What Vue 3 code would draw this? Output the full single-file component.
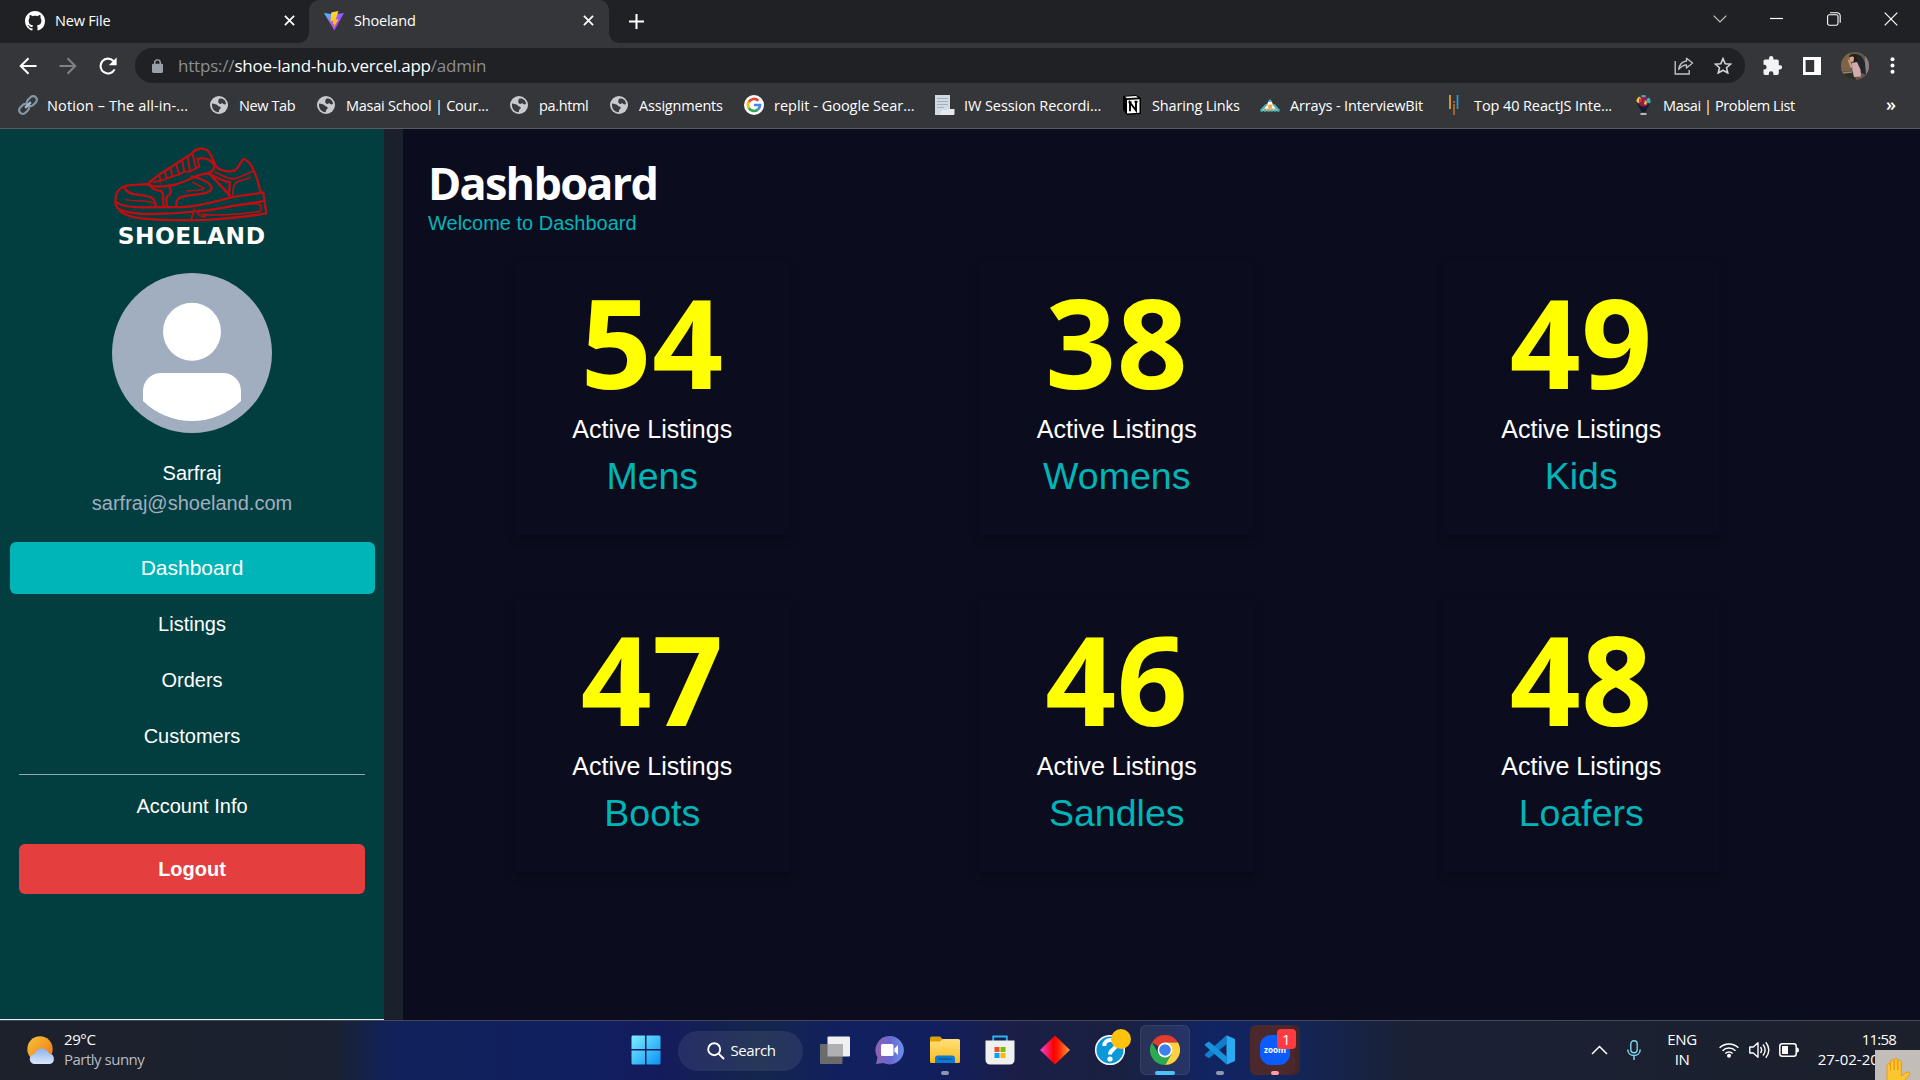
<script setup>
const bookmarks = [
  { icon: 'link', label: 'Notion – The all-in-...', width: 191, spacing: 0.12 },
  { icon: 'globe', label: 'New Tab', width: 107, spacing: -0.4 },
  { icon: 'globe', label: 'Masai School | Cour...', width: 193, spacing: -0.25 },
  { icon: 'globe', label: 'pa.html', width: 100, spacing: -0.35 },
  { icon: 'globe', label: 'Assignments', width: 135, spacing: -0.2 },
  { icon: 'google', label: 'replit - Google Sear...', width: 190, spacing: 0 },
  { icon: 'doc', label: 'IW Session Recordi...', width: 188, spacing: -0.08 },
  { icon: 'notion', label: 'Sharing Links', width: 138, spacing: -0.15 },
  { icon: 'ib', label: 'Arrays - InterviewBit', width: 184, spacing: -0.15 },
  { icon: 'bars', label: 'Top 40 ReactJS Inte...', width: 189, spacing: -0.1 },
  { icon: 'balloon', label: 'Masai | Problem List', width: 200, spacing: -0.4 },
]
const links = ['Dashboard', 'Listings', 'Orders', 'Customers']
const cards = [
  { count: 54, name: 'Mens' },
  { count: 38, name: 'Womens' },
  { count: 49, name: 'Kids' },
  { count: 47, name: 'Boots' },
  { count: 46, name: 'Sandles' },
  { count: 48, name: 'Loafers' },
]
</script>

<template>
  <div class="screen">
    <header class="browser">
      <div class="tabs">
        <div class="tab">
          <svg class="fav" viewBox="0 0 16 16"><path fill="#fff" d="M8 0C3.58 0 0 3.58 0 8c0 3.54 2.29 6.53 5.47 7.59.4.07.55-.17.55-.38 0-.19-.01-.82-.01-1.49-2.01.37-2.53-.49-2.69-.94-.09-.23-.48-.94-.82-1.13-.28-.15-.68-.52-.01-.53.63-.01 1.08.58 1.23.82.72 1.21 1.87.87 2.33.66.07-.52.28-.87.51-1.07-1.78-.2-3.64-.89-3.64-3.95 0-.87.31-1.59.82-2.15-.08-.2-.36-1.02.08-2.12 0 0 .67-.21 2.2.82.64-.18 1.32-.27 2-.27s1.36.09 2 .27c1.53-1.04 2.2-.82 2.2-.82.44 1.1.16 1.92.08 2.12.51.56.82 1.27.82 2.15 0 3.07-1.87 3.75-3.65 3.95.29.25.54.73.54 1.48 0 1.07-.01 1.93-.01 2.2 0 .21.15.46.55.38A8.01 8.01 0 0 0 16 8c0-4.42-3.58-8-8-8z"/></svg>
          <span class="tab-title">New File</span>
          <svg class="close" viewBox="0 0 12 12"><path d="M1 1l10 10M11 1L1 11" stroke="#fff" stroke-width="1.9"/></svg>
        </div>
        <div class="tab active">
          <svg class="fav" viewBox="0 0 20 20">
            <defs>
              <linearGradient id="viteA" x1="0" y1="0" x2="1" y2="1"><stop offset="0" stop-color="#41d1ff"/><stop offset=".55" stop-color="#a34bff"/><stop offset="1" stop-color="#bd34fe"/></linearGradient>
              <linearGradient id="viteB" x1="0" y1="0" x2="0" y2="1"><stop offset="0" stop-color="#ffdd35"/><stop offset="1" stop-color="#ffa800"/></linearGradient>
            </defs>
            <path fill="url(#viteA)" d="M0 2l10 1.6L20 2 10.4 19.6z"/>
            <path fill="url(#viteB)" d="M14.4 0L7.3 1.4 6.3 10.400l2.900-.5-.7 3.500 1.700-.5-1 4.800 5.400-9.500-2.900.4z"/>
          </svg>
          <span class="tab-title">Shoeland</span>
          <svg class="close" viewBox="0 0 12 12"><path d="M1 1l10 10M11 1L1 11" stroke="#fff" stroke-width="1.9"/></svg>
        </div>
        <svg class="plus" viewBox="0 0 16 16"><path d="M8 0v16M0 8h16" stroke="#fff" stroke-width="2.2"/></svg>
        <div class="window-controls">
          <svg width="14" height="8" viewBox="0 0 14 8"><path d="M.7.7L7 7l6.3-6.3" fill="none" stroke="#ccc" stroke-width="1.1"/></svg>
          <svg width="13" height="13" viewBox="0 0 13 13"><path d="M0 6.5h13" stroke="#fff" stroke-width="1.2"/></svg>
          <svg width="14" height="14" viewBox="0 0 14 14"><rect x=".6" y="2.8" width="10.4" height="10.4" rx="1.6" fill="none" stroke="#fff" stroke-width="1.1"/><path d="M3 .8h7.2a3 3 0 0 1 3 3v7" fill="none" stroke="#fff" stroke-width="1.1"/></svg>
          <svg width="14" height="14" viewBox="0 0 14 14"><path d="M.7.7l12.6 12.6M13.3.7L.7 13.3" stroke="#fff" stroke-width="1.2"/></svg>
        </div>
      </div>

      <div class="toolbar">
        <div class="nav-buttons">
          <svg width="18" height="18" viewBox="0 0 18 18"><path d="M17.500 9H2M9.500 1.200L1.700 9l7.800 7.800" fill="none" stroke="#fff" stroke-width="2"/></svg>
          <svg width="18" height="18" viewBox="0 0 18 18"><path d="M.5 9h15.500M8.500 1.200L16.300 9l-7.800 7.800" fill="none" stroke="#808184" stroke-width="2"/></svg>
          <svg width="18" height="18" viewBox="0 0 18 18"><path d="M15.600 12.400A7.400 7.400 0 1 1 14.400 4" fill="none" stroke="#fff" stroke-width="2.1"/><path d="M17.600.4v7.800H9.800z" fill="#fff"/></svg>
        </div>
        <div class="omnibox">
          <svg width="11" height="14" viewBox="0 0 12 15"><rect x="0" y="5" width="12" height="10" rx="1.5" fill="#9aa0a6"/><path d="M3 6V3.800a3 3 0 0 1 6 0V6" fill="none" stroke="#9aa0a6" stroke-width="1.600"/></svg>
          <span class="url">https://<b>shoe-land-hub.vercel.app</b>/admin</span>
          <svg class="share" width="20" height="18" viewBox="0 0 20 18"><path d="M1.200 4v13h14v-4" fill="none" stroke="#bdc1c6" stroke-width="1.400"/><path d="M12.500 1.200L18.600 6l-6.100 5V8C9 8 7 9.500 4.700 12.400 5.400 7.800 8 4.600 12.500 4z" fill="none" stroke="#bdc1c6" stroke-width="1.400" stroke-linejoin="round"/></svg>
          <svg width="18" height="17" viewBox="0 0 18 17"><path d="M9 1.600l2.200 5.100 5.500.4-4.200 3.600 1.300 5.300L9 13.200 4.200 16l1.300-5.300L1.300 7.100l5.500-.4z" fill="none" stroke="#d0d3d7" stroke-width="1.600"/></svg>
        </div>
        <div class="tool-icons">
          <svg width="19" height="19" viewBox="0 0 19 19"><path fill="#f1f3f4" d="M17 9.200h-1.200V5.300c0-.9-.8-1.700-1.700-1.700h-3.700V2.300a2.200 2.200 0 0 0-4.400 0v1.300H2.200C1.300 3.600.5 4.400.5 5.300v3.500h1.200a2.400 2.400 0 0 1 0 4.700H.5v3.700c0 .9.800 1.700 1.700 1.700h3.600v-1.300a2.300 2.300 0 0 1 4.600 0v1.300h3.700c.9 0 1.700-.8 1.700-1.700v-3.800H17a2.100 2.100 0 0 0 0-4.200z"/></svg>
          <svg width="18" height="18" viewBox="0 0 18 18"><path fill="#fff" fill-rule="evenodd" d="M0 0h18v18H0zM2.600 3v12h8.600V3z"/></svg>
          <svg width="28" height="28" viewBox="0 0 28 28">
            <defs><clipPath id="pf"><circle cx="14" cy="14" r="14"/></clipPath></defs>
            <g clip-path="url(#pf)"><rect width="28" height="28" fill="#65584a"/><path d="M0 0h9v22H0z" fill="#7d6448"/><path d="M24 0h4v28h-4z" fill="#8d7d80"/><path d="M13 2q8-1 11 9l1 12-6-3-5-9z" fill="#20282c"/><path d="M0 20l12-1 3 9H0z" fill="#2c2e28"/><path d="M1 21l10-1" stroke="#8f897a" stroke-width="1.500"/><path d="M8 4q4-4 8 0l1 6-4 2z" fill="#2a1c18"/><path d="M8.500 5.500q3-2 4.500 0l-.5 4-3 .5z" fill="#d9a98c"/><path d="M11 11l5-1 3.500 7.500.5 7-7 .5-1.500-6z" fill="#d3a9b0"/><path d="M6.500 7l2 1 3 6.500-1.500 2z" fill="#cfa58c"/></g>
          </svg>
          <svg width="5" height="17" viewBox="0 0 5 17"><g fill="#fff"><circle cx="2.500" cy="2.200" r="2"/><circle cx="2.500" cy="8.500" r="2"/><circle cx="2.500" cy="14.800" r="2"/></g></svg>
        </div>
      </div>

      <div class="bookmarks">
        <div v-for="b in bookmarks" :key="b.label" class="bookmark" :style="{ width: b.width + 'px', letterSpacing: b.spacing + 'px' }">
          <svg class="bm-icon" viewBox="0 0 20 20">
            <g v-if="b.icon === 'link'" fill="none" stroke="#8296a8" stroke-width="2.300" transform="rotate(-45 10 10)"><rect x="-1" y="6.300" width="11" height="7.400" rx="3.700"/><rect x="10" y="6.300" width="11" height="7.400" rx="3.700"/><path d="M6 10h8" stroke="#a9b8c5"/></g>
            <g v-else-if="b.icon === 'globe'"><circle cx="10" cy="10" r="9" fill="#c8cacd"/><path fill="#3a3b3f" d="M10.500 3.500c3.800-.5 6.300 2 6.500 5.500-1.200.8-3.200.5-3.800-1.200-.8 1.500-2.300 1.200-3.200.6-1-.8-1.300-3.600.5-4.900zM3 8.500c2 .4 5.200.6 6 2.200.5 1 2 .6 2.600 1.600.5 1-.6 2-1.500 2.600-.4 1 .2 1.600-.6 2.300C5.500 17 2.500 13.500 3 8.500z"/></g>
            <g v-else-if="b.icon === 'google'"><circle cx="10" cy="10" r="10" fill="#fff"/><g fill="none" stroke-width="2.700"><path d="M14.300 5.700A6 6 0 0 0 4.800 7" stroke="#ea4335"/><path d="M4.800 7a6 6 0 0 0 0 6" stroke="#fbbc05"/><path d="M4.800 13a6 6 0 0 0 9 1.600" stroke="#34a853"/><path d="M13.800 14.600A6 6 0 0 0 16 10h-6" stroke="#4285f4"/></g></g>
            <g v-else-if="b.icon === 'doc'"><path fill="#d0dae2" d="M1 0h15v15H9l-3 5H1z"/><path d="M3 3.500h11M3 6.500h11M3 9.500h11M3 12.500h7" stroke="#9fb0bd" stroke-width="1.200"/><path fill="#e4eaf0" d="M8 15h5l1-1h6.500v5q0 1-1 1h-14z"/></g>
            <g v-else-if="b.icon === 'notion'"><path fill="#000" d="M1 1l13-1 5 3v16l-14 1-4-5z"/><path fill="#fff" d="M5 5l12.500-.8v13.500L5 18.500zM3 1.800l11-.7 2 1.500-11 .7z"/><path fill="none" stroke="#000" stroke-width="1.900" d="M8 16.200V7.500l6 8V6.700M6.500 7.300h3M12.500 6.700h3"/></g>
            <g v-else-if="b.icon === 'ib'"><path fill="#f6b56a" d="M10 5l9 11H1z"/><path fill="#fff" d="M8 7h4v3H8zM5 10.500h3v3H5zM12 10.500h3v3h-3z"/><path fill="#f6a13a" d="M9 9.500h2.500v3H9z"/><path fill="#3fb8c4" d="M10 4l2.500 3h-5zM5.500 9L7 10.500 2.500 15H0zM14.500 9L13 10.500l4.500 4.500H20z"/><path stroke="#3fb8c4" stroke-width="2.500" stroke-dasharray="2.200 1.200" d="M.5 15.500h19"/></g>
            <g v-else-if="b.icon === 'bars'" stroke-width="1.700"><path stroke="#f2a33a" d="M6 0v14"/><path stroke="#b56a2c" d="M10 6v2M10 9v11"/><path stroke="#1c9fd8" d="M13.500 0v14"/></g>
            <g v-else><path fill="#171a33" d="M4 8h13l-4.500 9h-4z"/><circle cx="10.500" cy="6" r="5.500" fill="#8e1f4d"/><path fill="#f0c330" d="M3.200 6a7 7 0 0 1 3-4.500l2 2L5.500 8.500z"/><path fill="#30b7c0" d="M7.500 1q3-2 6 0l-3 1.500zM13.500 4.500l2.500-2q2.500 3 1 6l-3-1z"/><path fill="#d92b62" d="M6 3.500l3 .5v2l-3 2z"/><path fill="#f0c330" d="M12 5l2 2-1 3-2-1z"/><path fill="#b6b8bc" d="M7.500 18h6v2h-6z"/></g>
          </svg>
          <span>{{ b.label }}</span>
        </div>
        <span class="more">»</span>
      </div>
    </header>

    <div class="page">
      <aside class="sidebar">
        <svg class="logo" viewBox="0 0 600 360">
          <g fill="none" stroke="#c00d12" stroke-width="7" stroke-linejoin="round" stroke-linecap="round">
            <path d="M77 208C74 180 82 160 106 153C130 148 155 150 175 147C180 135 195 132 206 120L305 56C315 42 335 36 352 46C366 58 368 75 376 90C384 108 430 118 443 98C450 88 454 76 462 72C474 76 486 92 490 104C502 128 506 150 512 172L520 174L529 235C480 244 420 250 372 253C310 258 180 256 140 248C108 243 86 232 77 208Z"/>
            <path d="M79 200C88 212 118 216 150 217L280 216C350 212 395 192 440 184L519 173"/>
            <path d="M85 221C105 232 150 238 190 237C300 236 390 222 430 212L518 199"/>
            <path d="M103 155C106 174 128 178 150 180C178 184 196 184 197 213"/>
            <path d="M175 149C190 158 220 155 250 150C290 142 310 122 345 116C375 112 380 90 362 78C350 70 335 68 325 72"/>
            <path d="M181 150C184 160 192 166 212 168C225 170 215 190 221 213M237 152C247 172 243 178 232 184C225 190 232 200 230 213"/>
            <path d="M190 140L212 138L208 124M212 138L230 131L226 112M230 131L248 124L242 102M248 124L268 118L259 90M268 118L283 110L277 80M283 110L300 110L294 70M300 110L318 100L308 58M318 100L328 95L322 70" stroke-width="6"/>
            <path d="M305 124C335 130 366 145 365 160C360 180 320 176 285 183C264 187 256 198 260 213"/>
            <path d="M308 142L343 160C330 168 310 166 290 168" stroke-width="4"/>
            <path d="M345 117L358 116L420 182M360 117C382 130 402 138 420 142L416 180"/>
            <path d="M375 112C400 122 418 136 438 130C460 124 470 116 488 109M429 180C428 150 436 139 456 136L480 128" stroke-width="5"/>
            <path d="M313 223L304 252M329 224C318 240 330 246 345 244M345 227C400 218 450 208 500 206C518 208 514 224 510 229C460 238 390 242 335 238" stroke-width="5"/>
            <path d="M107 194C130 200 176 194 191 205" stroke-width="4"/>
          </g>
          <text x="83" y="326" textLength="442" lengthAdjust="spacing">SHOELAND</text>
        </svg>
        <svg class="avatar" viewBox="0 0 160 160">
          <circle cx="80" cy="80" r="80" fill="#a0aec0"/>
          <circle cx="80" cy="58.700" r="29" fill="#fff"/>
          <path fill="#fff" d="M31 128v-10a18 18 0 0 1 18-18h62a18 18 0 0 1 18 18v10a70 70 0 0 1-98 0z"/>
        </svg>
        <p class="user">Sarfraj</p>
        <p class="email">sarfraj@shoeland.com</p>
        <nav>
          <a v-for="(l, i) in links" :key="l" :class="{ current: i === 0 }">{{ l }}</a>
        </nav>
        <hr>
        <a class="account">Account Info</a>
        <button class="logout">Logout</button>
      </aside>
      <main>
        <h1>Dashboard</h1>
        <p class="welcome">Welcome to Dashboard</p>
        <section class="grid">
          <article v-for="c in cards" :key="c.name" class="card">
            <strong>{{ c.count }}</strong>
            <span class="active-label">Active Listings</span>
            <span class="category">{{ c.name }}</span>
          </article>
        </section>
      </main>
    </div>

    <footer class="taskbar">
      <div class="weather">
        <svg width="28" height="28" viewBox="0 0 28 28">
          <defs><linearGradient id="sun" x1="0" y1="0" x2="1" y2="1"><stop offset="0" stop-color="#f4c636"/><stop offset="1" stop-color="#f0701a"/></linearGradient><linearGradient id="cl" x1="0" y1="0" x2="0" y2="1"><stop offset="0" stop-color="#8fb2ee"/><stop offset="1" stop-color="#dbe7fb"/></linearGradient></defs>
          <circle cx="13" cy="13" r="12.700" fill="url(#sun)"/><path fill="url(#cl)" d="M8 28a5 5 0 0 1-.5-10C9 14 12 12.500 15 12.500s6 2 7 5a5.300 5.300 0 0 1 .5 10.500z"/>
        </svg>
        <div><span>29°C</span><span class="dim">Partly sunny</span></div>
      </div>
      <div class="apps">
        <div class="slot">
          <svg width="30" height="30" viewBox="0 0 30 30"><defs><linearGradient id="win" x1="0" y1="0" x2="1" y2="1"><stop offset="0" stop-color="#7cf0ff"/><stop offset="1" stop-color="#0a92f5"/></linearGradient></defs><path fill="url(#win)" d="M1.500.5H14V14H.5V1.500zM15.500.5h13l1 1V14h-14zM.5 15.500H14v14H1.500l-1-1zM15.500 15.500h14v13l-1 1h-13z"/></svg>
        </div>
        <div class="search">
          <svg width="18" height="18" viewBox="0 0 18 18"><circle cx="7.200" cy="7.200" r="6" fill="none" stroke="#fff" stroke-width="1.900"/><path d="M11.600 11.600l5.400 5.400" stroke="#fff" stroke-width="2"/></svg>
          <span>Search</span>
        </div>
        <div class="slot">
          <svg width="30" height="28" viewBox="0 0 30 28"><rect x="7.500" y=".5" width="22.500" height="20" rx="1" fill="#f0f0f2"/><rect x="0" y="8" width="22.500" height="20" rx="1" fill="#6b6b6b"/><path fill="#b0b0b2" d="M7.500 8h15v12.500h-15z"/></svg>
        </div>
        <div class="slot">
          <svg width="29" height="29" viewBox="0 0 29 29"><defs><linearGradient id="chat" x1="0" y1="0" x2="1" y2="0"><stop offset="0" stop-color="#8d63b0"/><stop offset=".5" stop-color="#6a67d0"/><stop offset="1" stop-color="#6a8fe8"/></linearGradient></defs><path fill="url(#chat)" d="M14.500 0a14.200 14.200 0 1 1-6 27L1 28l1.500-6.500A14.200 14.200 0 0 1 14.500 0z"/><rect x="6" y="8" width="12.500" height="12" rx="1.500" fill="#fff"/><path d="M19.500 12.500L23 9v10l-3.500-3.500z" fill="#fff"/></svg>
        </div>
        <div class="slot">
          <svg width="30" height="28" viewBox="0 0 30 28"><defs><linearGradient id="fold" x1="0" y1="0" x2="0" y2="1"><stop offset="0" stop-color="#ffe07a"/><stop offset="1" stop-color="#fbbb1c"/></linearGradient></defs><path fill="#e0a106" d="M0 2q0-1.500 1.500-1.500H10l3 3v5H0z"/><path fill="url(#fold)" d="M0 5.500h10l3-2.500h15.500Q30 3 30 4.500v21q0 1.500-1.500 1.500h-27Q0 27 0 25.500z"/><path fill="#0a7bd0" d="M5 27v-4.500q0-3 3-3h14q3 0 3 3V27z"/><path d="M8.500 23h13" stroke="#064f8e" stroke-width="1.200"/></svg>
          <i class="run"></i>
        </div>
        <div class="slot">
          <svg width="30" height="30" viewBox="0 0 30 30"><path d="M8.200 6V1.500h13.600V6" fill="none" stroke="#2ab6f0" stroke-width="1.800"/><path fill="#f0f0f1" d="M.5 5.500h29V25a4.500 4.500 0 0 1-4.500 4.500H5A4.500 4.500 0 0 1 .5 25z"/><path fill="#f04e23" d="M9.500 12h5v5h-5z"/><path fill="#7fba00" d="M15.500 12h5v5h-5z"/><path fill="#00a4ef" d="M9.500 18h5v5h-5z"/><path fill="#ffb900" d="M15.500 18h5v5h-5z"/></svg>
        </div>
        <div class="slot">
          <svg width="30" height="30" viewBox="0 0 30 30"><defs><linearGradient id="dia"><stop offset="0" stop-color="#f043d8"/><stop offset=".45" stop-color="#ff0000"/><stop offset=".6" stop-color="#ff1a00"/><stop offset="1" stop-color="#ffa040"/></linearGradient></defs><path fill="url(#dia)" d="M15 .5L30 15 15 29.500 0 15z"/></svg>
        </div>
        <div class="slot">
          <svg width="30" height="30" viewBox="0 0 30 30"><circle cx="15" cy="15" r="14.300" fill="#0a98d8" stroke="#fff" stroke-width="1.500"/><path d="M9.300 11c0-8 12-7.500 11.700-.8C20.800 14.800 15 14 15 19.500" fill="none" stroke="#fff" stroke-width="4"/><circle cx="15" cy="24" r="2.600" fill="#fff"/></svg>
          <i class="dot"></i>
        </div>
        <div class="slot">
          <div class="tile chrome">
            <svg width="30" height="30" viewBox="0 0 30 30"><path fill="#e33b2e" d="M15 15L2 7.500A15 15 0 0 1 28 7.500H15z"/><path fill="#fdd23e" d="M28 7.500A15 15 0 0 1 15 30L21.500 18.700 15 7.500z"/><path fill="#2da94f" d="M2 7.500A15 15 0 0 0 15 30L21.500 18.700H8.500z"/><circle cx="15" cy="15" r="7.400" fill="#fff"/><circle cx="15" cy="15" r="5.800" fill="#3d7fee"/></svg>
          </div>
          <i class="run wide"></i>
        </div>
        <div class="slot">
          <svg width="30" height="30" viewBox="0 0 30 30"><path fill="#0f7fcb" d="M21.500.3v9L4 23.300 0 20.800v-1.500z"/><path fill="#1693dc" d="M4 6.500L0 9v1.500l21.500 19v-8z"/><path fill="#2aaaf2" d="M21.500.3L30 4v22l-8.500 3.700z"/></svg>
          <i class="run"></i>
        </div>
        <div class="slot">
          <div class="tile zoom">
            <svg width="30" height="30" viewBox="0 0 30 30"><rect width="30" height="30" rx="11" fill="#0c5cfc"/><text x="4" y="18" textLength="22" lengthAdjust="spacingAndGlyphs">zoom</text></svg>
            <b class="badge">1</b>
          </div>
          <i class="run pink"></i>
        </div>
      </div>
      <div class="tray">
        <svg class="chev" width="17" height="10" viewBox="0 0 17 10"><path d="M1 9l7.500-7.500L16 9" fill="none" stroke="#fff" stroke-width="1.500"/></svg>
        <svg class="mic" width="14" height="20" viewBox="0 0 14 20"><rect x="3.800" y=".7" width="6.400" height="12" rx="3.200" fill="none" stroke="#7fd6ee" stroke-width="1.400"/><path d="M.8 9.500c0 8 12.400 8 12.400 0M7 15.600V20" fill="none" stroke="#7fd6ee" stroke-width="1.500"/></svg>
        <div class="lang"><span>ENG</span><span>IN</span></div>
        <svg class="wifi" width="20" height="16" viewBox="0 0 20 16"><g fill="none" stroke="#fff" stroke-width="1.500"><path d="M.6 5.800a13.300 13.300 0 0 1 18.800 0M3.500 8.700a9.200 9.200 0 0 1 13 0M6.300 11.500a5.200 5.200 0 0 1 7.400 0"/></g><circle cx="10" cy="13.800" r="2" fill="#fff"/></svg>
        <svg class="vol" width="21" height="18" viewBox="0 0 21 18"><g fill="none" stroke="#fff" stroke-width="1.400"><path d="M.8 6h3.500L9 1.800v14.400L4.300 12H.8z" stroke-linejoin="round"/><path d="M11.500 6q2.200 3 0 6M14 3.500q4.200 5.500 0 11M16.800 1.200q6 7.800 0 15.600"/></g></svg>
        <svg class="bat" width="20" height="14" viewBox="0 0 20 14"><rect x=".8" y=".8" width="16.400" height="12.400" rx="2.500" fill="none" stroke="#fff" stroke-width="1.500"/><rect x="3" y="3" width="6" height="8" fill="#fff"/><path d="M18 4.500q2 0 2 2.500t-2 2.500z" fill="#fff"/></svg>
        <div class="clock"><span class="time">11:58</span><span>27-02-2023</span></div>
      </div>
      <div class="hand">
        <svg width="26" height="26" viewBox="0 0 26 26"><path fill="#fdc62f" stroke="#e59a1a" stroke-width="1" d="M2 26V8q0-2.500 1.700-2.500T5.500 8v5V4q0-2.300 1.900-2.300T9.200 4v8V2.200Q9.200.5 11 .5t1.800 1.700V12 4q0-2 1.700-2t1.800 2v14l4-3q3-2 4.200-.5 1 1.300-2 4.500l-6 7z"/></svg>
      </div>
    </footer>
  </div>
</template>

<style>
body { margin: 0; background: #0b0d1e; }
</style>

<style scoped>
* { box-sizing: border-box; }
.screen { width: 1920px; height: 1080px; display: flex; flex-direction: column; overflow: hidden; font-family: "Open Sans", "Noto Sans", sans-serif; color: #fff; }
svg { display: block; flex: none; }
p, h1, hr { margin: 0; }
.browser { height: 129px; background: #35363a; border-bottom: 1px solid #5a5b60; flex: none; }
.tabs { height: 43px; background: #202124; display: flex; align-items: center; position: relative; }
.tab { display: flex; align-items: center; height: 43px; width: 309px; padding: 0 14px 2px 25px; }
.tab.active { width: 300px; background: #35363a; border-radius: 10px 10px 0 0; padding-left: 15px; padding-right: 15px; position: relative; }
.tab.active::before, .tab.active::after { content: ""; position: absolute; bottom: 0; width: 10px; height: 10px; }
.tab.active::before { left: -10px; background: radial-gradient(circle at 0 0, #202124 9.500px, #35363a 10px); }
.tab.active::after { right: -10px; background: radial-gradient(circle at 100% 0, #202124 9.500px, #35363a 10px); }
.fav { width: 20px; height: 20px; margin-right: 10px; }
.tab-title { font-size: 14.500px; letter-spacing: -.2px; flex: 1; line-height: 20px; }
.close { width: 11px; height: 11px; }
.plus { width: 15px; height: 15px; margin-left: 20px; }
.window-controls { margin-left: auto; margin-right: 22px; display: flex; align-items: center; gap: 43.500px; padding-bottom: 6px; }
.toolbar { height: 45px; display: flex; align-items: center; }
.nav-buttons { width: 135px; display: flex; gap: 22px; padding-left: 19px; }
.omnibox { width: 1610px; height: 35px; border-radius: 18px; background: #202124; display: flex; align-items: center; padding: 0 13px 0 17px; }
.url { font-size: 17px; letter-spacing: -.2px; color: #8b8f94; margin-left: 15px; padding-bottom: 1px; }
.url b { font-weight: 400; color: #fff; }
.share { margin-left: auto; margin-right: 20px; }
.tool-icons { display: flex; align-items: center; padding-left: 18px; gap: 21px; }
.tool-icons svg:nth-child(3) { margin-left: -1px; }
.bookmarks { height: 34px; display: flex; align-items: center; padding-left: 18px; font-size: 14.500px; white-space: nowrap; }
.bookmark { display: flex; align-items: center; flex: none; }
.bm-icon { width: 20px; height: 20px; margin-right: 10px; overflow: visible; }
.bookmark:first-child .bm-icon { margin-right: 9px; }
.more { margin-left: auto; margin-right: 24px; font-size: 18px; font-weight: 600; padding-bottom: 2px; }

.page { flex: 1; display: flex; background: #1a202c; font-family: "Liberation Sans", Arial, sans-serif; font-size: 20px; min-height: 0; }
.sidebar { width: 384px; background: #023e3f; display: flex; flex-direction: column; align-items: center; padding: 6px 19px 0; border-bottom: 1px solid #e8eeee; margin-right: 19px; text-align: center; }
.logo { width: 200px; height: 120px; margin-right: 4px; flex: none; }
.logo text { font: 700 70px "DejaVu Sans", sans-serif; fill: #fff; }
.avatar { width: 160px; height: 160px; margin-top: 18px; }
.user { line-height: 30px; margin-top: 25px; }
.email { line-height: 30px; color: #a0aec0; }
nav { width: 365px; margin-top: 24px; display: flex; flex-direction: column; gap: 4px; }
nav a { height: 52px; line-height: 52px; border-radius: 6px; }
nav a.current { background: #00b5b8; font-size: 21px; }
hr { width: 346px; height: 1px; border: 0; background: #93a7b2; margin-top: 12px; }
.account { line-height: 30px; margin-top: 16px; }
.logout { width: 346px; height: 50px; margin-top: 23px; border: 0; border-radius: 6px; background: #e53e3e; color: #fff; font: 700 20px "Liberation Sans", Arial, sans-serif; }
main { width: 1517px; background: #0b0d1e; padding: 30px 0 0 25px; }
h1 { font: 700 45px/48px "Open Sans", "Noto Sans", sans-serif; letter-spacing: -1.750px; padding-bottom: 2px; }
.welcome { color: #00b5b8; line-height: 28px; }
.grid { display: grid; grid-template-columns: repeat(3, 464.500px); row-gap: 62px; justify-items: center; margin: 23px 0 0 -8px; }
.card { width: 275px; height: 275px; display: flex; flex-direction: column; align-items: center; box-shadow: 0 5px 8px rgba(0, 0, 0, .25); }
.card strong { font: 700 124px/120px "Open Sans", "Noto Sans", sans-serif; color: #ff0; margin-top: 21px; letter-spacing: .5px; }
.active-label { font-size: 25px; line-height: 29px; margin-top: 14px; }
.category { font-size: 37.500px; line-height: 43px; margin-top: 11px; color: #00b5b8; }

.taskbar { height: 60px; flex: none; position: relative; display: flex; align-items: center; border-top: 1px solid #454957; font-size: 15px; letter-spacing: -.4px; background: linear-gradient(90deg, #1d212c 0, #1b2130 330px, #11225a 390px, #101f60 600px, #141b5c 660px, #14264c 760px, #11205e 840px, #111f5e 940px, #1a1e48 1010px, #1a2040 1120px, #112463 1210px, #132557 1300px, #1a2136 1400px, #1c202b 1920px); }
.weather { display: flex; align-items: center; width: 592px; padding-left: 27px; gap: 9px; margin-right: 26px; padding-bottom: 1px; }
.weather div, .lang, .clock { display: flex; flex-direction: column; line-height: 20px; padding-bottom: 2px; }
.weather .dim { color: #b9bcc2; letter-spacing: -.5px; }
.apps { display: flex; align-items: center; }
.slot { width: 55px; height: 59px; display: flex; align-items: center; justify-content: center; position: relative; padding-bottom: 1px; }
.search { width: 125px; height: 40px; border-radius: 20px; margin: 0 4.500px; background: rgba(255, 255, 255, .08); display: flex; align-items: center; padding-left: 29px; gap: 6px; }
.search span { padding-bottom: 2px; }
.run { position: absolute; bottom: 5px; left: 50%; width: 8px; height: 4px; margin-left: -4px; border-radius: 2px; background: #9296ac; }
.run.wide { width: 20px; margin-left: -10px; background: #4cc2ff; }
.run.pink { background: #ff99a4; }
.dot { position: absolute; right: 6px; top: 8px; width: 20px; height: 20px; border-radius: 50%; background: #ffc20e; }
.tile { width: 50px; height: 50px; border-radius: 6px; display: flex; align-items: center; justify-content: center; position: relative; flex: none; }
.chrome { background: rgba(255, 255, 255, .08); border: 1px solid rgba(255, 255, 255, .07); }
.zoom { background: #4a282b; box-shadow: inset -5px 0 0 #40252b; }
.zoom text { font: 700 8px "Open Sans", sans-serif; fill: #fff; letter-spacing: 0; }
.badge { position: absolute; left: 27px; top: 4px; width: 19px; height: 20px; line-height: 20px; border-radius: 4px; background: #ff3b3f; text-align: center; font-weight: 400; }
.tray { display: flex; align-items: center; position: absolute; left: 1591px; top: 0; height: 58px; }
.mic { margin-left: 19px; }
.lang { width: 40px; margin-left: 21px; align-items: center; }
.wifi { margin-left: 17px; }
.vol { margin-left: 10px; }
.bat { margin-left: 9px; }
.clock { width: 97px; align-items: flex-end; letter-spacing: 0; }
.clock .time { letter-spacing: -.8px; }
.hand { position: absolute; right: 0; bottom: 0; width: 45px; height: 30px; background: #c3bdb9; overflow: hidden; padding: 8px 0 0 10px; }
</style>
